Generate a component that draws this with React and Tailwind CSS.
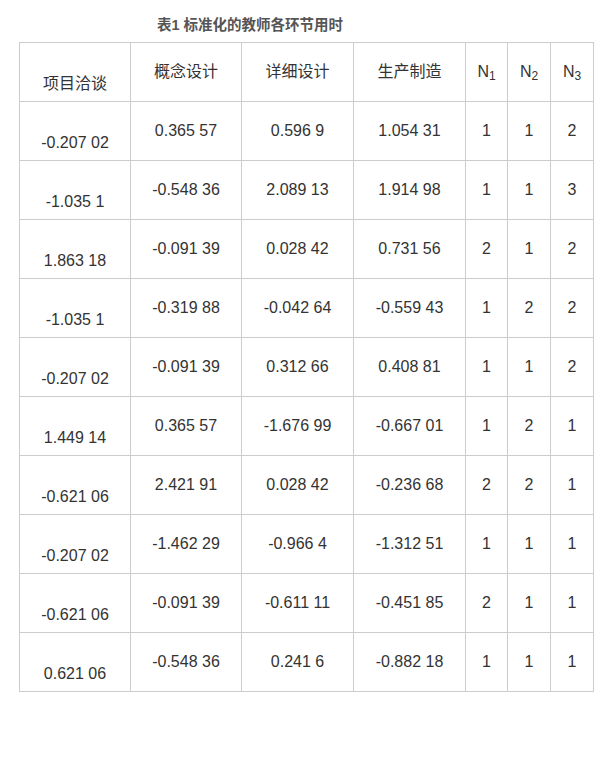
const rows = [
  ["-0.207 02", "0.365 57", "0.596 9", "1.054 31", "1", "1", "2"],
  ["-1.035 1", "-0.548 36", "2.089 13", "1.914 98", "1", "1", "3"],
  ["1.863 18", "-0.091 39", "0.028 42", "0.731 56", "2", "1", "2"],
  ["-1.035 1", "-0.319 88", "-0.042 64", "-0.559 43", "1", "2", "2"],
  ["-0.207 02", "-0.091 39", "0.312 66", "0.408 81", "1", "1", "2"],
  ["1.449 14", "0.365 57", "-1.676 99", "-0.667 01", "1", "2", "1"],
  ["-0.621 06", "2.421 91", "0.028 42", "-0.236 68", "2", "2", "1"],
  ["-0.207 02", "-1.462 29", "-0.966 4", "-1.312 51", "1", "1", "1"],
  ["-0.621 06", "-0.091 39", "-0.611 11", "-0.451 85", "2", "1", "1"],
  ["0.621 06", "-0.548 36", "0.241 6", "-0.882 18", "1", "1", "1"],
];

const headers = ["概念设计", "详细设计", "生产制造"];

const cell = "border border-[#cccccc] p-0 text-center align-middle";
const firstCell = "border border-[#cccccc] p-0 pb-[5px] text-center align-bottom";

const App = () => {
  return (
    <div
      className="min-h-[780px] w-[611px] bg-white pt-[15px] text-[#333333]"
      style={{ fontFamily: '"Liberation Sans", Arial, "Noto Sans CJK SC", sans-serif' }}>
      <div className="pl-[157px] text-[14.5px] font-bold leading-[20px] text-[#555555]">
        表1 标准化的教师各环节用时
      </div>
      <table className="mt-[7px] ml-[19px] w-[575px] table-fixed border-collapse text-[16px] leading-[24px]">
        <colgroup>
          <col className="w-[111px]" />
          <col className="w-[111px]" />
          <col className="w-[112px]" />
          <col className="w-[112px]" />
          <col className="w-[42px]" />
          <col className="w-[43px]" />
          <col className="w-[43px]" />
        </colgroup>
        <tbody>
          <tr className="h-[59px]">
            <td className={firstCell}>项目洽谈</td>
            {headers.map((h) => (
              <td key={h} className={cell}>
                {h}
              </td>
            ))}
            {["1", "2", "3"].map((n) => (
              <td key={n} className={cell}>
                N<sub className="text-[12px]">{n}</sub>
              </td>
            ))}
          </tr>
          {rows.map((row, i) => (
            <tr key={i} className="h-[59px]">
              {row.map((v, j) => (
                <td key={j} className={j === 0 ? firstCell : cell}>
                  {v}
                </td>
              ))}
            </tr>
          ))}
        </tbody>
      </table>
    </div>
  );
};

export default App;
